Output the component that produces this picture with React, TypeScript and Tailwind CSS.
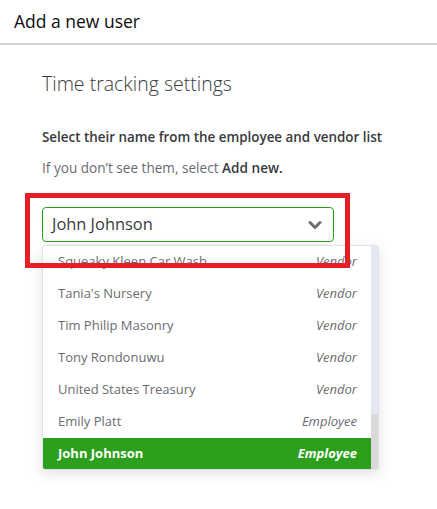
const rows = [
  { name: "Squeaky Kleen Car Wash", type: "Vendor" },
  { name: "Tania's Nursery", type: "Vendor" },
  { name: "Tim Philip Masonry", type: "Vendor" },
  { name: "Tony Rondonuwu", type: "Vendor" },
  { name: "United States Treasury", type: "Vendor" },
  { name: "Emily Platt", type: "Employee" },
  { name: "John Johnson", type: "Employee", selected: true },
];

function Chevron() {
  return (
    <svg width="14" height="10" viewBox="0 0 14 10" fill="none">
      <path d="M2 2.5l5 5 5-5" stroke="#6b6c72" strokeWidth="3" strokeLinecap="round" strokeLinejoin="round" />
    </svg>
  );
}

export default function App() {
  return (
    <div className="relative w-[437px] h-[509px] overflow-hidden bg-white font-['Open_Sans',sans-serif]">
      <header className="h-[45px] flex items-center px-[14px] border-b-2 border-[#d4d6da] text-[17.5px] text-[#0d0d0d]">
        Add a new user
      </header>

      <div className="pl-[42px] pr-[20px]">
        <h2 className="mt-[27px] text-[19.5px] leading-[24px] font-light text-[#393a3d]">Time tracking settings</h2>
        <p className="mt-[32px] text-[13.4px] leading-[18px] font-semibold text-[#393a3d] whitespace-nowrap">
          Select their name from the employee and vendor list
        </p>
        <p className="mt-[13px] text-[13.6px] leading-[18px] text-[#6b6c72] whitespace-nowrap">
          If you don’t see them, select <span className="font-semibold text-[#393a3d]">Add new.</span>
        </p>

        <div className="mt-[30px] w-[292px] h-[35px] flex items-center justify-between pl-[9px] pr-[11px] border border-[#2ca01c] rounded-[4px]">
          <span className="text-[16.4px] text-[#393a3d]">John Johnson</span>
          <Chevron />
        </div>

        <div className="mt-[3px] w-[337px] h-[225px] flex bg-white border border-[#e0e2e6] rounded-[3px] shadow-[0_4px_14px_rgba(0,0,0,0.12)] overflow-hidden">
          <ul className="flex-1">
            {rows.map((r) => (
              <li
                key={r.name}
                className={
                  r.selected
                    ? "h-[32px] flex items-center justify-between pl-[15px] pr-[14px] bg-[#2ca01c] text-white font-bold"
                    : "h-[32px] flex items-center justify-between pl-[15px] pr-[14px] text-[#6b6c72]"
                }
              >
                <span className="text-[13px]">{r.name}</span>
                <span className="text-[13px] italic">{r.type}</span>
              </li>
            ))}
          </ul>
          <div className="w-[7px] flex flex-col">
            <div className="flex-1 bg-[#e3e8f2]" />
            <div className="h-[55px] bg-[#d9d9d9]" />
          </div>
        </div>
      </div>

      <div className="absolute left-[25px] top-[193px] w-[325px] h-[75px] border-[5px] border-[#e61f26]" />
    </div>
  );
}
